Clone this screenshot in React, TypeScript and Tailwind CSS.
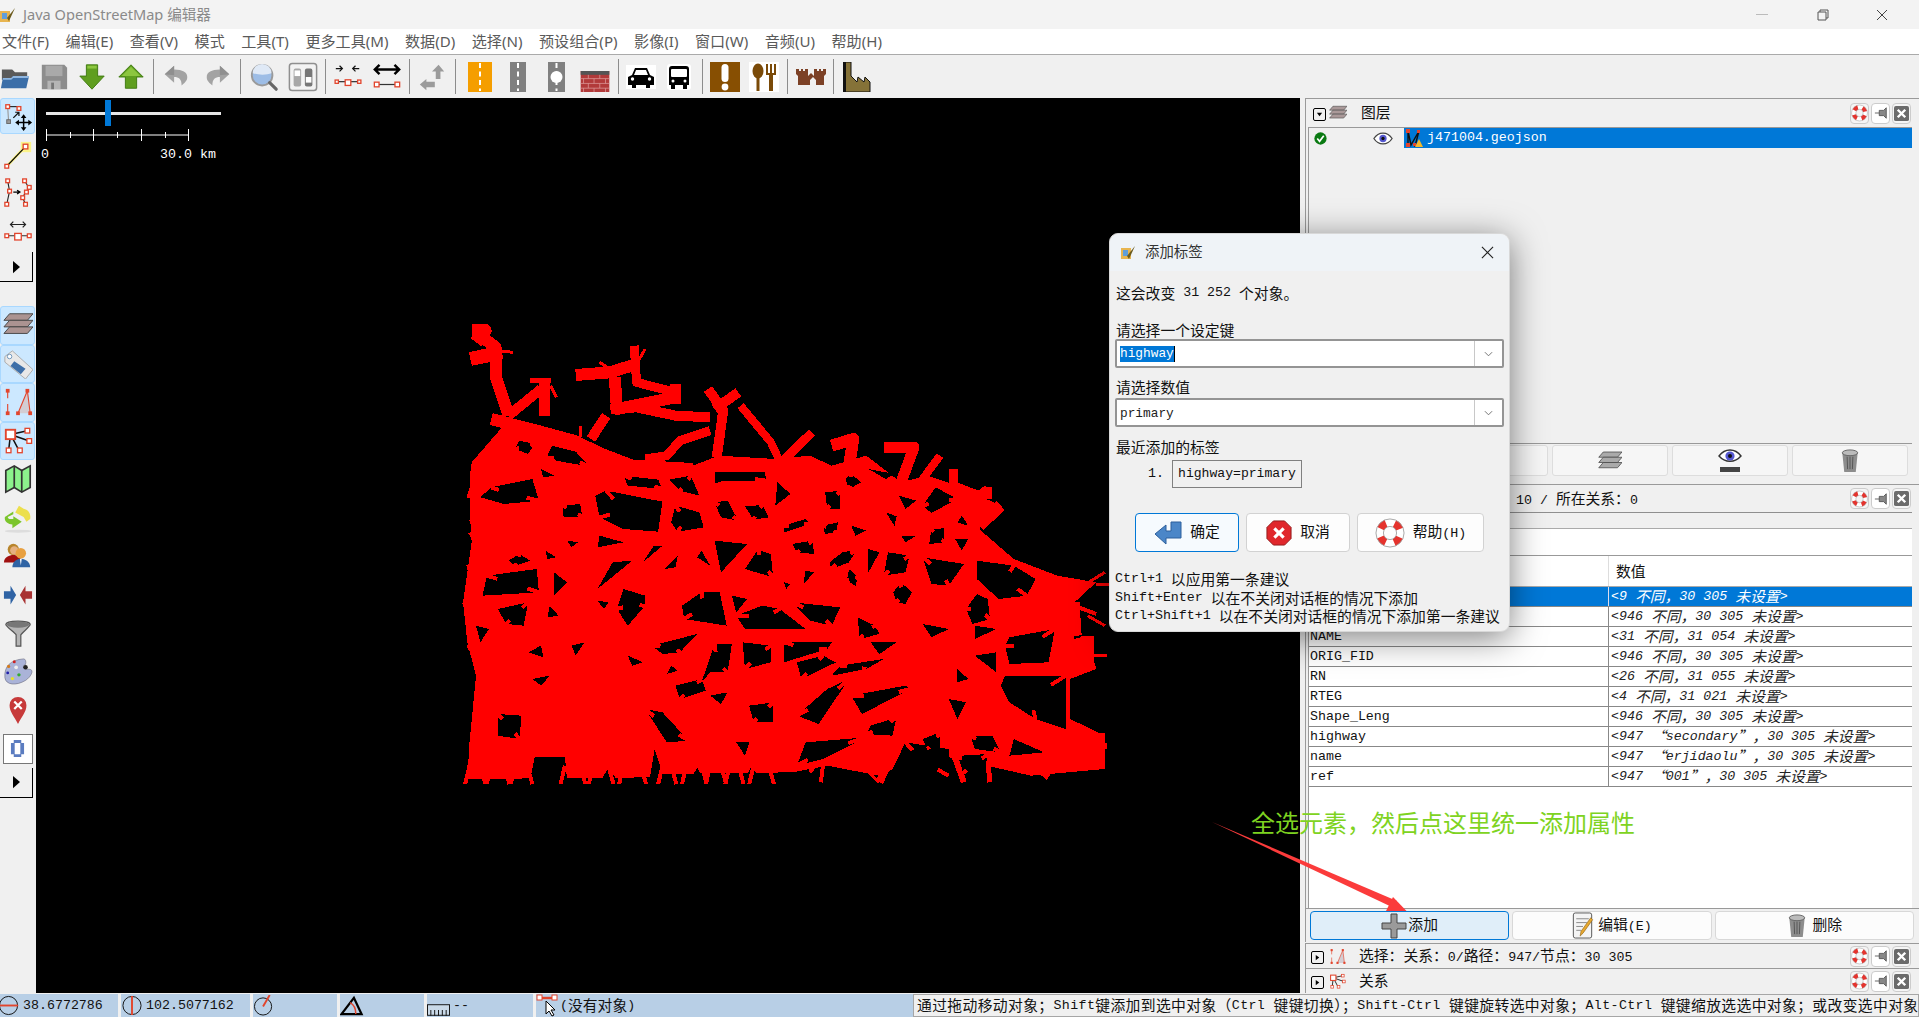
import React from "react";

const M = "font-['Liberation_Mono','Noto_Sans_CJK_SC',monospace]";
const S = "font-['Noto_Sans','Noto_Sans_CJK_SC',sans-serif]";

function T({ s }: { s: string }) {
  const parts = s.split(/([\u201C\u201D\u2E80-\uFFFF]+)/);
  return (
    <>
      {parts.map((p, i) =>
        /[\u201C\u201D\u2E80-\uFFFF]/.test(p) ? (
          <span key={i} className="text-[14.8px] font-['Noto_Sans_CJK_SC',sans-serif]">{p}</span>
        ) : (
          <span key={i}>{p}</span>
        )
      )}
    </>
  );
}

type IP = { c?: string };
const V = ({ c, children, box = 32 }: { c?: string; children: React.ReactNode; box?: number }) => (
  <svg viewBox={`0 0 ${box} ${box}`} className={c ?? "w-[30px] h-[30px]"}>{children}</svg>
);
const N = ({ x, y, s = 4 }: { x: number; y: number; s?: number }) => (
  <rect x={x - s / 2} y={y - s / 2} width={s} height={s} fill="#fff" stroke="#e2452d" strokeWidth="1.4" />
);

const Ring = ({ c }: IP) => (
  <V c={c}>
    <circle cx="16" cy="16" r="11" fill="none" stroke="#fff" strokeWidth="8" />
    <circle cx="16" cy="16" r="11" fill="none" stroke="#e5332d" strokeWidth="8" strokeDasharray="8 9.28" strokeDashoffset="-4.64" />
    <circle cx="16" cy="16" r="15" fill="none" stroke="#999" strokeWidth="0.9" />
    <circle cx="16" cy="16" r="7" fill="none" stroke="#999" strokeWidth="0.9" />
  </V>
);
const Folder = () => (
  <V>
    <path d="M2 8h11l3 3h13v8H2z" fill="#5a5a5a" />
    <path d="M1 28 3 17h9l2-2h17l-3 13z" fill="#3b6ea8" />
    <path d="M3 17h9l2-2h17l-.5 2H14l-2 2H3z" fill="#8fb6e0" />
  </V>
);
const Save = () => (
  <V>
    <path d="M3 3h24l3 3v23H3z" fill="#8d8d8d" />
    <rect x="7" y="4" width="18" height="11" fill="#a9a9a9" />
    <rect x="9" y="20" width="14" height="9" fill="#b5b5b5" />
    <rect x="13" y="22" width="3" height="7" fill="#777" />
  </V>
);
const Down = () => (
  <V>
    <path d="M10 3h12v12h7L16 29 3 15h7z" fill="#5f9e1f" stroke="#3f7a10" strokeWidth="1" />
    <path d="M11 4h10v3H11z" fill="#8cc63f" />
  </V>
);
const Up = () => (
  <V>
    <path d="M10 28h12V16h7L16 3 3 16h7z" fill="#5f9e1f" stroke="#3f7a10" strokeWidth="1" />
    <path d="M16 5 6 15h20z" fill="#8cc63f" />
  </V>
);
const Undo = ({ flip }: { flip?: boolean }) => (
  <V>
    <g transform={flip ? "translate(32 0) scale(-1 1)" : undefined}>
      <path d="M14 4 4 13l10 9v-6c5 0 8 2 8 9 5-4 6-6 6-9 0-5-5-8-14-8z" fill="#a3a3a3" />
      <path d="M14 4 4 13l10 1z" fill="#8f8f8f" />
    </g>
  </V>
);
const Zoom = () => (
  <V>
    <circle cx="14" cy="14" r="11" fill="#9dbde6" stroke="#9a9a9a" strokeWidth="2" />
    <path d="M4 12a10 10 0 0 1 20 0c-5 2-14 2-20 0z" fill="#dfe9f6" />
    <path d="m22 22 7 7" stroke="#666" strokeWidth="3.4" strokeLinecap="round" />
  </V>
);
const Prefs = () => (
  <V>
    <rect x="1.5" y="1.5" width="29" height="29" rx="3" fill="#f3f3f3" stroke="#8f8f8f" strokeWidth="1.6" />
    <rect x="6" y="7" width="8" height="19" rx="2" fill="#a8a8a8" />
    <rect x="18" y="7" width="8" height="19" rx="2" fill="#777" />
    <rect x="7" y="9" width="6" height="6" fill="#fff" />
    <rect x="19" y="16" width="6" height="6" fill="#fff" />
  </V>
);
const Merge = () => (
  <V>
    <path d="M3 7h7m-3-3 3 3-3 3M28 7h-7m3-3-3 3 3 3" fill="none" stroke="#111" strokeWidth="1.3" />
    <path d="M3 21h26" stroke="#222" strokeWidth="1.2" />
    <N x={4} y={21} s={3.5} /><N x={16} y={22} s={6} /><N x={28} y={21} s={3.5} />
  </V>
);
const Stretch = () => (
  <V>
    <path d="M3 8h26M8 3 3 8l5 5M24 3l5 5-5 5" fill="none" stroke="#000" strokeWidth="2.6" />
    <path d="M6 24h20" stroke="#333" strokeWidth="1.3" />
    <N x={5} y={24} s={5} /><N x={27} y={24} s={5} />
  </V>
);
const Reverse = () => (
  <V>
    <path d="M23 3l6 7h-4v8h-5v-8h-4z" fill="#9b9b9b" />
    <path d="M3 24l7-6v3h9v6h-9v3z" fill="#9b9b9b" />
  </V>
);
const Road = ({ bg, w = 24, circle }: { bg: string; w?: number; circle?: boolean }) => (
  <svg viewBox={`0 0 ${w} 30`} className="h-[30px]" style={{ width: w }}>
    <rect width={w} height="30" fill={bg} />
    <path d={`M${w / 2} 1v28`} stroke="#fff" strokeWidth="2" strokeDasharray="5 3.5" />
    {circle && <circle cx={w / 2} cy="15" r="6" fill="#fff" />}
  </svg>
);
const Brick = () => (
  <svg viewBox="0 0 30 22" className="w-[30px] h-[21px] mt-[9px]">
    <rect width="30" height="22" fill="#b23a3a" />
    <rect width="30" height="4" fill="#555" />
    <path d="M0 8h30M0 13h30M0 18h30M8 4v4M20 4v4M3 8v5M14 8v5M26 8v5M8 13v5M20 13v5M3 18v4M14 18v4M26 18v4" stroke="#d99" strokeWidth=".8" />
  </svg>
);
const Car = () => (
  <svg viewBox="0 0 30 24" className="w-[30px] h-[24px]">
    <rect width="30" height="24" fill="#fff" />
    <path d="M9 3h12l3 7 4 2v8h-4v3h-4v-3H10v3H6v-3H2v-8l4-2z" fill="#000" />
    <path d="M10 5h10l2 5H8z" fill="#fff" />
    <circle cx="6.5" cy="14" r="1.7" fill="#fff" /><circle cx="23.5" cy="14" r="1.7" fill="#fff" />
  </svg>
);
const Bus = () => (
  <svg viewBox="0 0 24 26" className="w-[24px] h-[26px]">
    <rect width="24" height="26" rx="3" fill="#fff" />
    <path d="M5 2h14q3 0 3 3v16h-2v4h-4v-4H8v4H4v-4H2V5q0-3 3-3z" fill="#000" />
    <rect x="4" y="5" width="16" height="8" rx="1" fill="#fff" />
    <circle cx="6" cy="17" r="1.5" fill="#fff" /><circle cx="18" cy="17" r="1.5" fill="#fff" />
  </svg>
);
const Excl = () => (
  <svg viewBox="0 0 30 30" className="w-[30px] h-[30px]">
    <rect width="30" height="30" fill="#874f02" />
    <rect x="11.5" y="2" width="7" height="18" rx="3.5" fill="#fff" />
    <circle cx="15" cy="25" r="3.4" fill="#fff" />
  </svg>
);
const Food = () => (
  <svg viewBox="0 0 30 30" className="w-[30px] h-[30px]">
    <rect width="30" height="30" fill="#fff" />
    <ellipse cx="9" cy="9" rx="5.5" ry="7.5" fill="#7a4a08" />
    <rect x="7.5" y="14" width="3" height="15" fill="#7a4a08" />
    <path d="M18 2v10h8V2M22 2v26" fill="none" stroke="#7a4a08" strokeWidth="2" />
    <rect x="20" y="12" width="4" height="17" fill="#7a4a08" />
  </svg>
);
const Castle = () => (
  <svg viewBox="0 0 30 18" className="w-[30px] h-[18px]">
    <path d="M0 1h3v2h2V1h2v2h2V1h3v7l3-3 3 3V1h3v2h2V1h2v2h2V1h3v5l-2 2v9h-8v-5l-3-3-3 3v5H2V8L0 6z" fill="#7c4126" />
  </svg>
);
const Factory = () => (
  <svg viewBox="0 0 28 30" className="w-[28px] h-[30px]">
    <path d="M1 0h7v14l6 6 1-5 6 5 1-5 5 5v10H1z" fill="#857238" stroke="#111" strokeWidth="1" />
    <rect x="0" y="0" width="3" height="30" fill="#111" />
  </svg>
);

const Sep = () => <div className="w-[1px] h-[35px] bg-[#8c8c8c] mx-[3px] shrink-0" />;
const TB = ({ children, cn }: { children: React.ReactNode; cn?: string }) => (
  <div className={`w-[38.5px] shrink-0 flex items-center justify-center ${cn ?? ""}`}>{children}</div>
);

const Select = () => (
  <V>
    <path d="M5 6h12" stroke="#222" strokeWidth="1.2" />
    <path d="M5 6 6 22" stroke="#999" strokeWidth="1.2" />
    <N x={5} y={6} s={4} /><N x={17} y={8} s={4} />
    <rect x="4" y="20" width="4" height="4" fill="#999" stroke="#666" />
    <path d="m11 18 6-6m-4 0h4v4" fill="none" stroke="#111" strokeWidth="1.3" />
    <path d="M22 16v14M15 23h14" stroke="#000" strokeWidth="1.6" fill="none" />
    <path d="M22 14l-3 4h6zM22 32l-3-4h6zM13 23l4-3v6zM31 23l-4-3v6z" fill="#000" />
  </V>
);
const DrawL = () => (
  <V>
    <rect x="19" y="2" width="11" height="11" fill="#fbf38a" />
    <path d="M4 28 24 7" stroke="#fbf38a" strokeWidth="3.2" />
    <path d="M4 28 24 7" stroke="#000" strokeWidth="1.2" />
    <N x={24} y={7} s={5} /><N x={4} y={28} s={4} />
  </V>
);
const Split = () => (
  <V>
    <path d="M5 3 7 14 4 28M23 3l5 8-4 4-3 6 3 7" fill="none" stroke="#222" strokeWidth="1.2" />
    <path d="M11 15h7m-3-2 3 2-3 2" stroke="#000" strokeWidth="1.4" fill="none" />
    <N x={5} y={3} /><N x={7} y={14} /><N x={4} y={28} /><N x={23} y={3} /><N x={28} y={10} /><N x={25} y={15} /><N x={21} y={21} /><N x={24} y={28} />
  </V>
);
const Mirror = () => (
  <svg viewBox="0 0 32 24" className="w-[30px] h-[24px]">
    <path d="M8 4h16M11 1 8 4l3 3M21 1l3 3-3 3" fill="none" stroke="#222" strokeWidth="1.3" />
    <path d="M3 16h26" stroke="#222" /><N x={4} y={16} /><N x={16} y={17} s={7} /><N x={28} y={16} />
  </svg>
);
const Layers = ({ c, f = "#ab9391" }: { c?: string; f?: string }) => (
  <V c={c}>
    <path d="M7 4h25l-6 7H1z" fill={f} stroke="#444" strokeWidth="1" />
    <path d="M7 11h25l-6 7H1z" fill={f} stroke="#444" strokeWidth="1" />
    <path d="M7 18h25l-6 7H1z" fill={f} stroke="#444" strokeWidth="1" />
  </V>
);
const Tag = () => (
  <V>
    <path d="M2 8 10 2l22 20-8 10L2 14z" fill="#e8e8e8" stroke="#aaa" />
    <path d="M12 13 24 21l-5 6L8 18z" fill="#3e6fa8" />
    <circle cx="7" cy="8" r="2.4" fill="#fff" stroke="#6a93bb" />
  </V>
);
const TriSel = ({ c }: IP) => (
  <V c={c}>
    <path d="M26 4 29 28H16z" fill="#d3cdd3" />
    <path d="M5 4v8M5 18v10M26 4 16 28M26 4l3 24" fill="none" stroke="#e2452d" strokeWidth="1.2" />
    <g fill="#e2452d"><rect x="3" y="2" width="4" height="4" /><rect x="24" y="2" width="4" height="4" /><rect x="3" y="26" width="4" height="4" /><rect x="14" y="26" width="4" height="4" /><rect x="27" y="26" width="4" height="4" /></g>
  </V>
);
const Rel = ({ c }: IP) => (
  <V c={c}>
    <path d="M8 9 26 5M8 9l20 7M8 9 6 26M8 9l9 17" stroke="#111" strokeWidth="1.6" />
    <rect x="3" y="4" width="10" height="10" fill="#fff" stroke="#e2452d" strokeWidth="2" />
    <N x={26} y={5} s={5} /><N x={28} y={16} s={5} /><N x={6} y={26} s={5} /><N x={18} y={26} s={5} />
  </V>
);
const MapI = () => (
  <V>
    <path d="M3 7l9-5 8 5 9-5v23l-9 5-8-5-9 5z" fill="#8cf28c" stroke="#333" strokeWidth="1.8" />
    <path d="M12 2v23M20 7v23" stroke="#333" strokeWidth="1.8" />
  </V>
);
const Sync = () => (
  <V>
    <path d="M17 3l5 3c5 1 8 5 7 11l-4 3-3-5-9-5z" fill="#ecdf4d" />
    <path d="M11 9 2 15c-1 5 4 8 8 8v4l10-7-9-6v3c-3 0-5 1-6-2l6-3z" fill="#7bc52c" />
    <ellipse cx="16" cy="30" rx="14" ry="1.6" fill="#ddd" />
  </V>
);
const Users = () => (
  <V>
    <path d="M1 23c0-6 6-8 10-8s9 2 9 8z" fill="#a01010" />
    <circle cx="11" cy="9" r="6" fill="#b8852c" /><circle cx="12" cy="10" r="4.4" fill="#e5b080" />
    <path d="M10 28c0-6 5-9 9-9s10 3 10 9z" fill="#2f63a4" />
    <path d="m18 19 1 7 1-7z" fill="#fff" />
    <circle cx="19" cy="13" r="5.6" fill="#e8a040" />
  </V>
);
const Arrows = () => (
  <V>
    <path d="M1 12h7V6l6 10-6 10v-6H1z" fill="#2f63a4" />
    <path d="M31 12h-7V6l-6 10 6 10v-6h7z" fill="#a83232" />
  </V>
);
const Funnel = () => (
  <V>
    <path d="M3 7c0-5 26-5 26 0 0 2-9 9-10 11v12h-5V18C13 16 3 9 3 7z" fill="#b5b5b5" stroke="#555" strokeWidth="1.3" />
    <ellipse cx="16" cy="7" rx="12" ry="3.4" fill="#777" />
  </V>
);
const Palette = () => (
  <V>
    <path d="M22 2C8 3 1 10 2 22c1 8 12 9 22 3 3-2 6-5 7-9 0-3-2-3-6-3-4-1-4-4-1-5 1-3 0-6-2-6z" fill="#aab3d8" stroke="#667" strokeWidth=".6" />
    <circle cx="24" cy="11" r="2.4" fill="#222" /><circle cx="12" cy="5" r="1.6" fill="#c22" /><circle cx="6" cy="10" r="1.7" fill="#d57a1a" /><circle cx="5" cy="17" r="1.5" fill="#22a" /><circle cx="10" cy="23" r="1.8" fill="#e6e02a" /><circle cx="17" cy="19" r="1.8" fill="#3a3" />
    <circle cx="14" cy="11" r="2" fill="#eee" />
  </V>
);
const Pin = () => (
  <V>
    <path d="M16 31C12 23 7 18 7 11a9 9 0 0 1 18 0c0 7-5 12-9 20z" fill="#c73a3a" />
    <path d="m12 7 8 8m0-8-8 8" stroke="#fff" strokeWidth="2.4" />
  </V>
);
const ZeroBox = () => (
  <div className="w-[30px] h-[30px] bg-white border border-[#777] flex items-center justify-center">
    <svg viewBox="0 0 16 20" className="w-[15px] h-[19px]"><path d="M4 1h8v3h3v12h-3v3H4v-3H1V4h3z M5 4v12h6V4z" fill="#5b7cc0" fillRule="evenodd" /></svg>
  </div>
);
const Arrow = () => (
  <div className="w-[33px] h-[30px] border-r border-b border-black flex items-center justify-center">
    <svg viewBox="0 0 8 14" className="w-[7px] h-[14px]"><path d="M0 0l8 7-8 7z" fill="#000" /></svg>
  </div>
);

const LB = ({ children, sel, h = "h-[38.5px]" }: { children: React.ReactNode; sel?: boolean; h?: string }) => (
  <div className={`w-[35px] ${h} rounded-[3px] border flex items-center justify-center ${sel ? "bg-[#cce8ff] border-[#a9d8ff]" : "border-transparent"}`}>{children}</div>
);

const Head = ({ children, cn }: { children: React.ReactNode; cn?: string }) => (
  <div className={`flex items-center relative ${cn ?? ""}`}>{children}</div>
);
const Tw = ({ open }: { open?: boolean }) => (
  <div className="w-[13px] h-[13px] border-[1.5px] border-black rounded-[2px] flex items-center justify-center shrink-0 mt-[3px]">
    <svg viewBox="0 0 8 8" className="w-[7px] h-[7px]">
      {open ? <path d="M1 2h6L4 6z" fill="#000" /> : <path d="M2 1v6l4-3z" fill="#000" />}
    </svg>
  </div>
);
const HBtns = () => (
  <div className="flex gap-[2px] ml-auto mr-[8px] shrink-0">
    <div className="w-[19px] h-[21px] rounded-[4px] border border-[#ccc] bg-[#f5f5f5] flex items-center justify-center"><Ring c="w-[17px] h-[18px]" /></div>
    <div className="w-[19px] h-[21px] rounded-[4px] border border-[#ccc] bg-white flex items-center justify-center">
      <svg viewBox="0 0 16 16" className="w-[14px] h-[14px]"><path d="M1 8h5M6 5h5l3-3v12l-3-3H6z" fill="#888" stroke="#555" strokeWidth="1" /></svg>
    </div>
    <div className="w-[19px] h-[21px] rounded-[4px] border border-[#ccc] bg-[#f5f5f5] flex items-center justify-center">
      <svg viewBox="0 0 16 16" className="w-[15px] h-[15px]"><rect width="16" height="16" rx="2" fill="#6b6b6b" /><path d="m4 4 8 8m0-8-8 8" stroke="#fff" strokeWidth="2.6" /></svg>
    </div>
  </div>
);

const rows: [string, string, boolean?][] = [
  ["FID", "<9 不同，30 305 未设置>", true],
  ["LENGTH", "<946 不同，30 305 未设置>"],
  ["NAME", "<31 不同，31 054 未设置>"],
  ["ORIG_FID", "<946 不同，30 305 未设置>"],
  ["RN", "<26 不同，31 055 未设置>"],
  ["RTEG", "<4 不同，31 021 未设置>"],
  ["Shape_Leng", "<946 不同，30 305 未设置>"],
  ["highway", "<947 “secondary”，30 305 未设置>"],
  ["name", "<947 “erjidaolu”，30 305 未设置>"],
  ["ref", "<947 “001”，30 305 未设置>"],
];

const roads: [string, number][] = [
  ["60,70 105,115 105,200 135,320", 12], ["47,150 120,130", 14], ["50,65 80,65 60,100", 14], ["110,125 145,130", 3],
  ["135,320 210,240", 10], ["218,215 218,320", 11], ["185,215 232,215", 5], ["232,230 245,265", 3],
  ["95,330 200,365 285,395 350,435 420,470 560,480", 12],
  ["290,198 370,190 430,165", 12], ["425,110 430,220 520,250", 9], ["450,120 430,165", 3], ["345,160 375,185", 3],
  ["380,205 385,300 520,265", 12], ["520,225 520,285", 11],
  ["370,300 430,295 520,320 600,325", 10], ["360,320 325,390", 10], ["300,350 300,385", 3],
  ["595,240 630,305 615,445", 10], ["665,250 610,300", 10], ["600,365 530,395 500,440 450,450", 9],
  ["670,290 740,400 765,470", 8], ["765,460 835,370", 9], ["880,410 930,390 920,470", 12],
  ["1000,415 1070,415 1040,520", 11], ["1130,440 1090,510 1030,590", 8], ["1160,480 1160,530 1220,560 1240,540", 9],
  ["1240,535 1240,570", 9], ["1270,590 1220,650", 12],
  ["1510,790 1460,830", 3], ["1490,825 1530,825", 3], ["1490,915 1440,890", 4], ["1510,950 1470,920", 3],
  ["1440,880 1445,980", 10], ["1470,980 1470,1080", 13], ["1480,1040 1515,1040", 3],
  ["135,380 100,480 50,470", 10], ["130,510 60,530 50,570", 11],
  ["50,690 100,650", 13], ["50,620 100,650", 12], ["40,780 100,760", 8], ["30,890 90,860", 6], ["40,1015 90,990", 5],
  ["1420,1280 1510,1280", 6], ["1420,1300 1515,1310", 6], ["1430,1320 1500,1375", 5], ["1280,1300 1380,1405", 6],
  ["1050,1250 990,1420", 8], ["1160,1330 1185,1420", 6], ["1240,1350 1245,1420", 5], ["840,1350 900,1330", 5], ["860,1330 830,1390", 4], ["860,1370 855,1420", 4],
  ["790,1300 780,1385", 10], ["965,1390 990,1420", 3],
];

const silhouette = "50,460 130,340 280,390 340,440 420,470 560,470 620,440 750,450 830,440 880,470 960,440 1040,520 1100,500 1170,530 1220,560 1270,590 1220,660 1300,750 1400,800 1490,820 1440,880 1440,990 1470,980 1490,1080 1430,1110 1430,1230 1510,1280 1510,1380 1340,1400 1100,1330 990,1400 870,1370 790,1390 470,1395 470,1405 40,1410 45,1300 60,1100 40,1000 30,880 50,700 45,600 45,510";

const holes = [
  "95,535 190,510 205,575 125,585 70,565", "160,395 195,405 180,435 150,420", "235,410 290,428 322,472 265,460 222,448",
  "210,480 240,500 215,505", "260,590 300,585 305,622 262,625", "335,560 360,545 490,578 480,668 400,660 345,625",
  "400,500 480,512 490,540 410,530", "505,512 555,500 575,560 530,545", "520,590 575,610 585,655 525,668 510,640",
  "610,490 690,490 725,488 730,515 640,515 610,530", "610,580 640,575 665,635 625,625", "680,592 720,588 735,625 700,632",
  "755,520 785,555 750,590", "865,550 900,545 900,600 870,600", "925,495 948,520 920,540 912,510", "965,480 1025,495 1005,510",
  "1035,560 1075,575 1050,600", "1120,535 1170,570 1110,612 1090,590", "1005,610 1030,622 1025,650", "1180,620 1195,650 1170,640",
  "770,650 820,630 830,645 770,670", "790,705 835,695 840,735 800,730", "860,650 895,640 890,670 865,675", "925,650 960,665 935,680",
  "1110,660 1140,658 1140,700 1105,705", "1040,680 1075,680 1050,700", "1165,690 1195,690 1180,725", "875,760 905,730 938,722 920,760 880,780",
  "965,720 990,730 965,790", "1010,730 1060,740 1050,790 1000,800", "1090,745 1185,765 1150,830 1110,825",
  "1215,755 1300,770 1350,810 1330,860 1265,870 1215,810", "1215,855 1240,870 1245,930 1205,945 1190,900", "1040,820 1065,850 1050,885 1030,880 1022,850",
  "820,785 840,790 815,825", "920,780 940,805 935,830 915,815", "770,820 785,825 775,840", "610,695 685,705 625,790", "710,722 740,735 745,805 680,780",
  "470,710 490,710 445,760", "525,740 495,780 520,775", "580,725 600,770 570,745", "160,735 185,755 150,770 135,755", "220,725 245,745 225,750",
  "270,695 295,700 280,715", "345,680 400,700 340,715", "375,760 420,755 340,840", "240,790 270,820 240,860", "85,800 200,780 205,850 75,860",
  "110,900 180,880 170,950 130,945", "230,890 250,920 225,925", "340,875 365,880 355,900", "400,840 450,860 450,890 410,950 385,900",
  "580,850 622,850 638,950 540,930 535,890", "650,860 685,870 660,910", "660,920 720,890 760,900 820,960 680,960", "790,880 900,895 880,950 830,935",
  "940,925 980,950 990,975 945,990", "1090,945 1150,960 1110,985", "1290,985 1395,960 1380,1060 1290,1065 1280,1010", "1210,1040 1260,1030 1260,1090",
  "1280,1100 1420,1100 1420,1260 1350,1230 1290,1180 1270,1130", "465,1010 570,975 530,1030 490,1035", "675,1000 740,1010 740,1060 680,1080",
  "770,1000 880,1000 870,1020 770,1060", "610,1005 650,1005 640,1090 600,1090 580,1120", "410,1040 445,1060 420,1070", "510,1070 525,1085 500,1095",
  "920,1110 850,1245 800,1220 870,1140", "1050,1130 1062,1140 950,1215 925,1160", "970,1000 1030,1000 990,1035", "800,1060 860,1040 890,1060 810,1110",
  "900,1070 1000,1050 960,1080 880,1100", "1170,1080 1195,1110 1170,1120", "1150,1170 1190,1180 1170,1230", "970,1250 1030,1225 1020,1280 960,1275",
  "1200,1280 1250,1280 1270,1330 1210,1320", "1090,1290 1130,1270 1130,1340 1100,1320", "450,1200 490,1210 550,1295 500,1300", "690,1190 745,1180 745,1240 700,1240",
  "110,1215 165,1220 160,1290 110,1280", "520,1130 580,1110 590,1145 530,1170", "600,1160 640,1150 625,1185", "280,1010 310,1000 290,1040", "180,1030 210,1010 215,1045",
  "60,950 90,960 70,1000", "190,1110 230,1100 210,1130", "820,1300 960,1285 860,1350 800,1370", "1050,1300 1150,1320 1150,1400 1010,1410",
  "1300,1290 1370,1330 1290,1340", "660,1300 690,1300 680,1340", "1210,950 1260,960 1210,990", "1340,1100 1400,1180 1350,1160",
  "1180,1340 1240,1335 1230,1405 1180,1395",
  "185,1412 195,1345 265,1345 270,1412", "460,1412 472,1320 488,1385 488,1412", "555,1412 570,1375 585,1412", "680,1412 695,1370 715,1412", "350,1412 365,1375 385,1412",
];
const spikes: string[] = [];
[45, 70, 95, 125, 150, 178, 265, 300, 330, 365, 400, 440, 490, 510, 545, 580, 600, 625, 645, 665, 700, 735].forEach((x, i) => {
  spikes.push(`${x},1370 ${x + (i % 2 ? 12 : -10)},1425`);
});
// short barbs that run from each hole's corner toward its middle, as the stubs of side roads do
const barbs = holes.flatMap((h, i) => {
  const pts = h.split(" ").map((p) => p.split(",").map(Number));
  if (pts.length < 4 || pts[0][1] > 1340) return [];
  const cx = pts.reduce((a, p) => a + p[0], 0) / pts.length;
  const cy = pts.reduce((a, p) => a + p[1], 0) / pts.length;
  const a = pts[i % pts.length];
  const b = pts[(i + 2) % pts.length];
  const f = (p: number[]) => `${p[0]},${p[1]} ${p[0] + (cx - p[0]) * 0.42},${p[1] + (cy - p[1]) * 0.42}`;
  return [f(a), f(b)];
});

const MapCanvas = () => (
  <div className="relative flex-1 bg-black overflow-hidden">
    <div className="absolute left-[10px] top-[14px] w-[175px] h-[3px] bg-[#e6e6e6]" />
    <div className="absolute left-[69px] top-[2px] w-[6px] h-[26px] bg-[#0078d7]" />
    <svg className="absolute left-[8px] top-[30px] w-[150px] h-[18px]" viewBox="0 0 150 18">
      <path d="M2.5 1v12M2.5 7H144.5M49.5 1v12M97.5 1v12M144.500 1v12M26.5 4v6M73.5 4v6M121.5 4v6" stroke="#fff" strokeWidth="1" fill="none" />
    </svg>
    <div className={`absolute left-[5px] top-[50px] text-white text-[13.3px] leading-[14px] ${M}`}>0</div>
    <div className={`absolute left-[124px] top-[50px] text-white text-[13.3px] leading-[14px] whitespace-pre ${M}`}>30.0 km</div>
    <svg viewBox="0 0 1568 1440" preserveAspectRatio="none" shapeRendering="crispEdges" className="absolute left-[414px] top-[211px] w-[680px] h-[480px]">
      <g fill="none" stroke="#ff0000" strokeLinejoin="round">
        {roads.map(([p, w], i) => <polyline key={i} points={p} strokeWidth={w} vectorEffect="non-scaling-stroke" />)}
        {spikes.map((p, i) => <polyline key={i} points={p} strokeWidth={4} vectorEffect="non-scaling-stroke" />)}
      </g>
      <polygon points={silhouette} fill="#ff0000" />
      {holes.map((p, i) => <polygon key={i} points={p} fill="#000" />)}
      <g fill="none" stroke="#ff0000">
        {barbs.map((p, i) => <polyline key={i} points={p} strokeWidth={4} vectorEffect="non-scaling-stroke" />)}
        {spikes.map((p, i) => <polyline key={i} points={p} strokeWidth={4} vectorEffect="non-scaling-stroke" />)}
      </g>
    </svg>
  </div>
);

const DBtn = ({ children, w, def }: { children: React.ReactNode; w: string; def?: boolean }) => (
  <div className={`${w} h-[39px] rounded-[4px] border flex items-center justify-center gap-[8px] ${def ? "bg-[#f6fafe] border-[#0078d7]" : "bg-[#fdfdfd] border-[#d2d2d2]"}`}>{children}</div>
);
const Combo = ({ children }: { children: React.ReactNode }) => (
  <div className="h-[29px] rounded-[2px] border-2 border-[#949494] bg-white flex items-center">
    <div className="flex-1 pl-[3px] flex items-center text-[12.8px]">{children}</div>
    <div className="w-[28px] h-full border-l border-[#c8c8c8] flex items-center justify-center">
      <svg viewBox="0 0 10 6" className="w-[9px] h-[6px]"><path d="m1 1 4 4 4-4" fill="none" stroke="#666" /></svg>
    </div>
  </div>
);
const Dialog = () => (
  <div className={`absolute left-[1109px] top-[233px] w-[401px] h-[399px] rounded-[9px] bg-[#f0f0f0] shadow-[0_6px_34px_rgba(0,0,0,0.5)] border border-[#d8d8d8] text-[#111] text-[13.3px] leading-none ${M}`}>
    <div className="h-[37px] bg-[#eff3f7] rounded-t-[9px] flex items-center pl-[10px]">
      <svg viewBox="0 0 16 16" className="w-[16px] h-[16px]"><rect x="1" y="3" width="10" height="11" fill="#e8b550" /><rect x="3" y="5" width="5" height="6" fill="#5f9edb" /><path d="M15 1 9 14 7 11z" fill="#6b5a1c" /></svg>
      <span className={`ml-[9px] text-[#333] text-[14.4px] ${S}`}>添加标签</span>
      <svg viewBox="0 0 14 14" className="w-[13px] h-[13px] ml-auto mr-[15px]"><path d="m1 1 12 12M13 1 1 13" stroke="#222" strokeWidth="1.2" /></svg>
    </div>
    <div className="px-[5px]">
      <div className="h-[16px] mt-[14px] flex items-center whitespace-pre pl-[1px]"><T s="这会改变 31 252 个对象。" /></div>
      <div className="h-[16px] mt-[21px] flex items-center pl-[1px]"><T s="请选择一个设定键" /></div>
      <div className="mt-[1px]"><Combo><span className="bg-[#0078d7] text-white h-[16px] leading-[16px] border-r border-black">highway</span></Combo></div>
      <div className="h-[16px] mt-[11px] flex items-center pl-[1px]"><T s="请选择数值" /></div>
      <div className="mt-[3px]"><Combo><span className="text-[#222] pt-[3px]">primary</span></Combo></div>
      <div className="h-[16px] mt-[12px] flex items-center pl-[1px]"><T s="最近添加的标签" /></div>
      <div className="flex items-center mt-[5px] pl-[33px] gap-[8px]">
        <span>1.</span>
        <span className="h-[28px] w-[130px] border border-[#808080] flex items-center justify-center text-[13.1px]">highway=primary</span>
      </div>
      <div className="flex gap-[7px] mt-[25px] pl-[20px]">
        <DBtn w="w-[104px]" def>
          <svg viewBox="0 0 28 28" className="w-[28px] h-[28px]"><path d="M27 3H17v9h-5V6L1 15l11 10v-6h15z" fill="#4b86c8" stroke="#2d5f9c" /></svg>
          <span className="text-[14.6px]"><T s="确定" /></span>
        </DBtn>
        <DBtn w="w-[104px]">
          <svg viewBox="0 0 28 28" className="w-[26px] h-[26px]"><path d="M8 1h12l7 7v12l-7 7H8l-7-7V8z" fill="#e0272c" stroke="#8f1a1a" /><path d="m9 9 10 10m0-10L9 19" stroke="#fff" strokeWidth="3.4" /></svg>
          <span className="text-[14.6px]"><T s="取消" /></span>
        </DBtn>
        <DBtn w="w-[127px]">
          <Ring c="w-[30px] h-[30px]" />
          <span><T s="帮助(H)" /></span>
        </DBtn>
      </div>
      <div className="mt-[18px] leading-[18px] whitespace-pre">
        <div className="h-[18px] flex items-center"><T s="Ctrl+1 以应用第一条建议" /></div>
        <div className="h-[19px] flex items-center"><T s="Shift+Enter 以在不关闭对话框的情况下添加" /></div>
        <div className="h-[18px] flex items-center"><T s="Ctrl+Shift+1 以在不关闭对话框的情况下添加第一条建议" /></div>
      </div>
    </div>
  </div>
);

export default function App() {
  return (
    <div className={`relative w-[1919px] h-[1017px] overflow-hidden flex flex-col bg-[#f0f0f0] ${M}`}>
      <div className={`h-[29px] bg-[#f3f3f3] flex items-center relative ${S}`}>
        <svg viewBox="0 0 16 16" className="w-[16px] h-[16px]"><rect x="0" y="4" width="10" height="11" fill="#e8b550" /><rect x="2" y="6" width="5" height="6" fill="#5f9edb" /><path d="M15 1 9 14 7 11z" fill="#6b5a1c" /></svg>
        <span className="ml-[7px] text-[#8a8a8a] text-[14.6px]">Java OpenStreetMap 编辑器</span>
        <div className="ml-auto flex items-center">
          <div className="w-[12px] h-[1px] bg-[#bbb] mr-[49px]" />
          <svg viewBox="0 0 12 12" className="w-[12px] h-[12px] mr-[47px]"><path d="M3 3V1h8v8H9M1 3h8v8H1z" fill="none" stroke="#555" /></svg>
          <svg viewBox="0 0 12 12" className="w-[12px] h-[12px] mr-[31px]"><path d="m1 1 10 10M11 1 1 11" stroke="#444" /></svg>
        </div>
      </div>
      <div className={`h-[26px] bg-white border-b border-[#aaa] flex items-center gap-[16.5px] pl-[2px] text-[#5a5a5a] text-[15.1px] ${S}`}>
        {["文件(F)", "编辑(E)", "查看(V)", "模式", "工具(T)", "更多工具(M)", "数据(D)", "选择(N)", "预设组合(P)", "影像(I)", "窗口(W)", "音频(U)", "帮助(H)"].map((m) => <span key={m}>{m}</span>)}
      </div>
      <div className="h-[43px] flex items-center bg-[#f0f0f0] -ml-[4px]">
        <TB><Folder /></TB><TB><Save /></TB><TB><Down /></TB><TB><Up /></TB><Sep />
        <TB><Undo /></TB><TB cn="ml-[3px]"><Undo flip /></TB><Sep />
        <TB cn="ml-[1px]"><Zoom /></TB><TB><Prefs /></TB><Sep />
        <TB><Merge /></TB><TB><Stretch /></TB><Sep />
        <TB><Reverse /></TB><Sep />
        <TB cn="ml-[2px]"><Road bg="#f59e00" /></TB><TB><Road bg="#808080" w={16} /></TB><TB><Road bg="#808080" w={17} circle /></TB><TB cn="items-end"><Brick /></TB><Sep />
        <TB><Car /></TB><TB><Bus /></TB><Sep />
        <TB><Excl /></TB><TB cn="ml-[1px]"><Food /></TB><Sep />
        <TB cn="ml-[1px]"><Castle /></TB><Sep />
        <TB cn="ml-[1px]"><Factory /></TB>
      </div>
      <div className="flex-1 flex min-h-0">
        <div className="w-[36px] shrink-0 flex flex-col">
          <LB sel h="h-[36px]"><Select /></LB>
          <div className="h-[2px]" />
          <LB h="h-[38px]"><DrawL /></LB>
          <LB h="h-[38px]"><Split /></LB>
          <LB h="h-[40px]"><Mirror /></LB>
          <Arrow />
          <div className="h-[24px]" />
          <LB sel><Layers /></LB>
          <LB sel><Tag /></LB>
          <LB sel><TriSel /></LB>
          <LB sel><Rel /></LB>
          <LB><MapI /></LB>
          <LB><Sync /></LB>
          <LB><Users /></LB>
          <LB><Arrows /></LB>
          <LB><Funnel /></LB>
          <LB><Palette /></LB>
          <LB><Pin /></LB>
          <div className="w-[35px] h-[38px] flex items-center justify-center"><ZeroBox /></div>
          <Arrow />
        </div>
        <MapCanvas />
        <div className="w-[617px] ml-[2px] shrink-0 flex flex-col pl-[3px] text-[13.3px] leading-none text-[#111]">
          <div className="h-[386px] border-l border-t border-[#9a9a9a] flex flex-col">
            <Head cn="h-[28px] pl-[7px] gap-[3px]">
              <Tw open />
              <Layers c="w-[18px] h-[18px] ml-[0px]" f="#a99" />
              <span className="ml-[11px] text-[14.6px]"><T s="图层" /></span>
              <HBtns />
            </Head>
            <div className="h-[317px] ml-[2px] border-y border-[#999] border-l flex flex-col mr-[7px]">
              <div className="h-[20px] flex items-center">
                <svg viewBox="0 0 14 14" className="w-[13px] h-[13px] ml-[5px]"><circle cx="7" cy="7" r="6.6" fill="#0a7a12" /><path d="m3.5 7 2.500 3 4.500-6" fill="none" stroke="#fff" strokeWidth="1.8" /></svg>
                <svg viewBox="0 0 22 14" className="w-[20px] h-[13px] ml-[46px]"><path d="M1 7c5-8 15-8 20 0-5 8-15 8-20 0z" fill="#fff" stroke="#444" strokeWidth="1.4" /><circle cx="11" cy="7" r="4" fill="#5558d0" /><circle cx="11" cy="7" r="1.8" fill="#111" /></svg>
                <div className="flex-1 ml-[11px] h-[20px] bg-[#0078d7] flex items-center text-white">
                  <svg viewBox="0 0 20 20" className="w-[20px] h-[20px]"><path d="M4 3v15M4 3l3 14 8-14-4 15h6" fill="none" stroke="#111" strokeWidth="1.4" /><g fill="#e2452d"><rect x="2" y="1" width="4" height="4" /><rect x="13" y="2" width="3" height="3" /><rect x="2" y="15" width="4" height="4" /><rect x="9" y="15" width="3" height="3" /></g><path d="m15 11 4 8h-8z" fill="#f5b92b" /></svg>
                  <span className="ml-[3px] whitespace-pre">j471004.geojson</span>
                </div>
              </div>
            </div>
            <div className="flex gap-[4px] pl-[3px] pr-[11px] h-[31px] mt-[1px] justify-end">
              {[0, 1, 2, 3].map((i) => (
                <div key={i} className="w-[116px] rounded-[3px] border border-[#ddd] bg-[#f6f6f6] flex items-center justify-center">
                  {i === 1 && <Layers c="w-[24px] h-[24px]" f="#aaa" />}
                  {i === 2 && (
                    <svg viewBox="0 0 24 26" className="w-[24px] h-[26px]"><path d="M1 8c6-8 16-8 22 0-6 7-16 7-22 0z" fill="#fff" stroke="#333" strokeWidth="1.4" /><circle cx="12" cy="8" r="4.6" fill="#5558d0" /><circle cx="12" cy="8" r="2" fill="#111" /><rect x="2" y="19" width="20" height="5" fill="#444" /></svg>
                  )}
                  {i === 3 && (
                    <svg viewBox="0 0 20 26" className="w-[20px] h-[25px]"><path d="M2 5h16l-2 20H4z" fill="#8d8d8d" /><ellipse cx="10" cy="5" rx="8" ry="3" fill="#bbb" stroke="#666" /><path d="M7 9l.5 13M10 9v13M13 9l-.5 13" stroke="#555" /></svg>
                  )}
                </div>
              ))}
            </div>
          </div>
          <div className="h-[458px] border-l border-t border-[#9a9a9a] flex flex-col">
            <Head cn="h-[27px] pl-[5px]">
              <span className="whitespace-pre absolute left-[210px] top-[6px]"><T s="10 / 所在关系：0" /></span>
              <HBtns />
            </Head>
            <div className="h-[16px] border-t border-[#8f8f8f] ml-[2px] mr-[7px] bg-[#f0f0f0]" />
            <div className="h-[27px] border-t border-[#aaa] ml-[2px] mr-[7px] bg-white" />
            <div className="flex-1 ml-[2px] mr-[7px] border-t border-l border-[#999] bg-white flex flex-col">
              <div className="h-[31px] flex border-b border-[#aaa] bg-white">
                <div className="w-[300px] border-r border-[#ddd]" />
                <div className="pl-[7px] flex items-center"><T s="数值" /></div>
              </div>
              {rows.map(([k, v, sel]) => (
                <div key={k} className={`h-[20px] flex border-b border-[#888] items-stretch ${sel ? "bg-[#0078d7] text-white border-[#0078d7]" : ""}`}>
                  <div className={`w-[300px] pl-[1px] flex items-center border-r ${sel ? "border-[#dde]" : "border-[#888]"}`}>{k}</div>
                  <div className={`pl-[2px] flex items-center italic whitespace-pre ${sel ? "" : "text-[#222]"}`}><T s={v} /></div>
                </div>
              ))}
            </div>
            <div className="h-[34px] border-t border-[#999] flex gap-[3px] pt-[2px] pl-[4px] pr-[5px]">
              <div className="flex-1 h-[29px] rounded-[4px] border border-[#0078d7] bg-[#e0eef9] flex items-center justify-center gap-[1px]">
                <svg viewBox="0 0 26 26" className="w-[26px] h-[26px]"><path d="M10 1h6v9h9v6h-9v9h-6v-9H1v-6h9z" fill="#9a9a9a" stroke="#444" strokeWidth="1" /></svg>
                <span className="text-[14.6px]"><T s="添加" /></span>
              </div>
              <div className="flex-1 h-[29px] rounded-[4px] border border-[#d8d8d8] bg-[#fcfcfc] flex items-center justify-center gap-[4px]">
                <svg viewBox="0 0 22 28" className="w-[22px] h-[27px]"><rect x="1" y="1" width="19" height="26" rx="2" fill="#f4f4f4" stroke="#555" /><path d="M4 7h13M4 11h11M4 15h7M4 19h5" stroke="#888" /><path d="m21 8-10 14-3 3 1-5L19 6z" fill="#e7a92f" stroke="#8a5a0a" strokeWidth=".6" /></svg>
                <span><T s="编辑(E)" /></span>
              </div>
              <div className="flex-1 h-[29px] rounded-[4px] border border-[#d8d8d8] bg-[#fcfcfc] flex items-center justify-center gap-[6px]">
                <svg viewBox="0 0 20 26" className="w-[20px] h-[25px]"><path d="M2 5h16l-2 20H4z" fill="#8d8d8d" /><ellipse cx="10" cy="5" rx="8" ry="3" fill="#bbb" stroke="#666" /><path d="M7 9l.5 13M10 9v13M13 9l-.5 13" stroke="#555" /></svg>
                <span className="text-[14.6px]"><T s="删除" /></span>
              </div>
            </div>
          </div>
          <div className="h-[25px] border-l border-t border-[#9a9a9a] flex items-center pl-[5px] mt-[1px]">
            <Tw /><TriSel c="w-[17px] h-[17px] ml-[5px]" />
            <span className="ml-[13px] whitespace-pre"><T s="选择：关系：0/路径：947/节点：30 305" /></span>
            <HBtns />
          </div>
          <div className="h-[25px] border-l border-t border-[#9a9a9a] flex items-center pl-[5px]">
            <Tw /><Rel c="w-[17px] h-[17px] ml-[5px]" />
            <span className="ml-[13px]"><T s="关系" /></span>
            <HBtns />
          </div>
        </div>
      </div>
      <div className="h-[23px] flex gap-[3px] text-[13.3px] leading-none text-[#111] mt-[1px]">
        {[
          [118, "lat", "38.6772786"],
          [129, "lon", "102.5077162"],
          [84, "head", ""],
          [84, "ang", ""],
          [106, "rule", "--"],
          [377, "sel", "(没有对象)"],
        ].map(([w, k, t]) => (
          <div key={k as string} className={`bg-[#b8cfe6] flex items-center overflow-hidden whitespace-pre shrink-0 ${k === "sel" ? "gap-0" : "gap-[3px]"}`} style={{ width: w as number }}>
            {k === "lat" && <svg viewBox="0 0 22 22" className="w-[21px] h-[21px] -ml-[1px]"><circle cx="10" cy="11" r="9.5" fill="none" stroke="#111" /><path d="M0 11h20" stroke="#e2452d" strokeWidth="2" /></svg>}
            {k === "lon" && <svg viewBox="0 0 22 22" className="w-[22px] h-[21px]"><circle cx="11" cy="11" r="9.5" fill="none" stroke="#111" /><path d="M11 1v20" stroke="#e2452d" strokeWidth="2" /></svg>}
            {k === "head" && <svg viewBox="0 0 22 22" className="w-[22px] h-[21px]"><circle cx="10" cy="12" r="9" fill="none" stroke="#111" /><path d="m10 12 7-12" stroke="#e2452d" strokeWidth="2" /></svg>}
            {k === "ang" && <svg viewBox="0 0 24 22" className="w-[24px] h-[21px]"><path d="M1 20 14 3l8 17z" fill="none" stroke="#000" strokeWidth="2.4" /><path d="M10 8q6 3 6 12" fill="none" stroke="#e2452d" strokeWidth="1.5" /></svg>}
            {k === "rule" && <svg viewBox="0 0 24 12" className="w-[23px] h-[12px] mt-[8px]"><rect x=".5" y=".5" width="23" height="11" fill="#c9d9e8" stroke="#111" /><path d="M4 6v6M8 6v6M12 6v6M16 6v6M20 6v6" stroke="#111" /></svg>}
            {k === "sel" && <svg viewBox="0 0 24 23" className="w-[24px] h-[23px]"><path d="M3 4h18" stroke="#e2452d" strokeWidth="2.4" /><rect x="1" y="1" width="5" height="5" fill="#fff" stroke="#e2452d" /><rect x="16" y="1" width="5" height="5" fill="#fff" stroke="#e2452d" /><path d="M10 7v13l3-3 3 5 2-1-3-5h4z" fill="#fff" stroke="#000" /></svg>}
            <T s={t as string} />
          </div>
        ))}
        <div className="flex-1 min-w-0 border border-[#a6a6a6] bg-[#f0f0f0] flex items-center pl-[3px] overflow-hidden whitespace-pre ml-[-3px] tracking-[0.37px]">
          <T s="通过拖动移动对象；Shift键添加到选中对象（Ctrl 键键切换）；Shift-Ctrl 键键旋转选中对象；Alt-Ctrl 键键缩放选选中对象；或改变选中对象" />
        </div>
      </div>

      <Dialog />
      <span className={`absolute left-[1251px] top-[808px] text-[#7ed321] text-[24px] leading-[30px] ${S}`}>全选元素，然后点这里统一添加属性</span>
      <svg viewBox="0 0 220 110" className="absolute left-[1200px] top-[815px] w-[220px] h-[110px]">
        <path d="M12 7 197 86l-3 7z" fill="#fb3b3b" />
        <path d="M193 82 206.500 96 186 96z" fill="#fb3b3b" />
      </svg>
    </div>
  );
}
